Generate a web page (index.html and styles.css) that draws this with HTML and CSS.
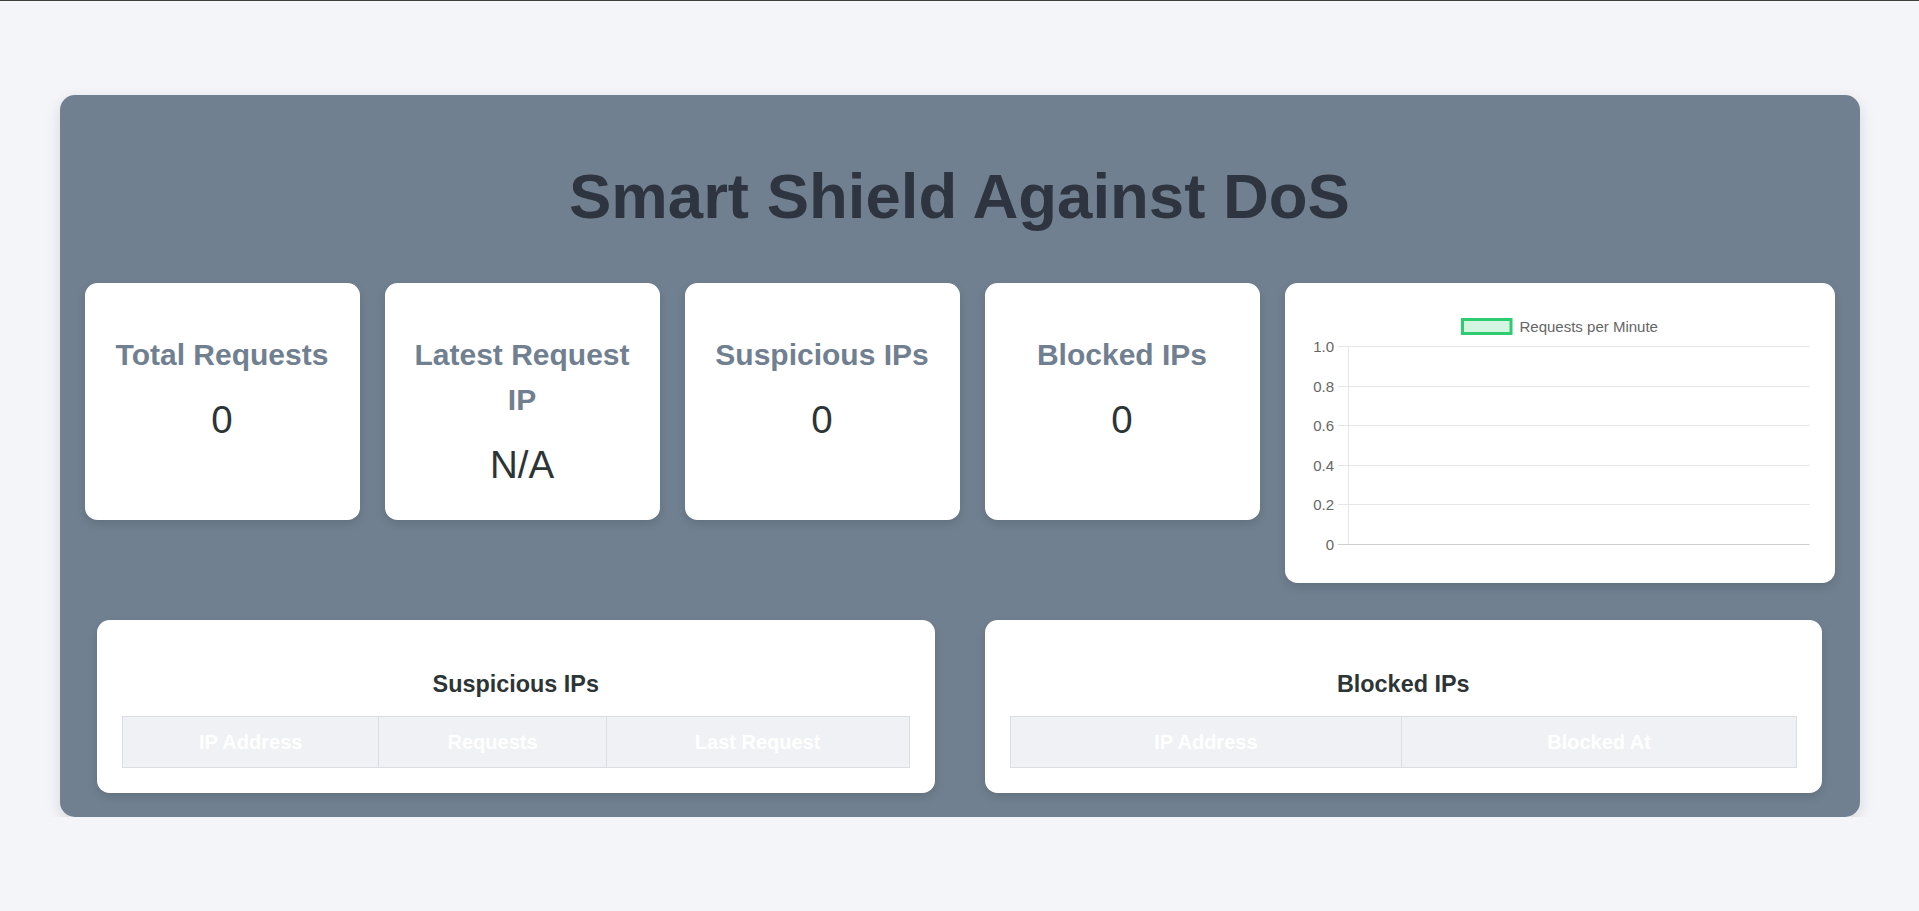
FILE: index.html
```html
<!DOCTYPE html>
<html lang="en">
<head>
<meta charset="utf-8">
<title>Smart Shield Against DoS</title>
<link rel="stylesheet" href="styles.css">
</head>
<body>
<div class="container">
  <h1 class="page-title">Smart Shield Against DoS</h1>

  <div class="top-row">
    <div class="stats">
      <div class="card stat-card">
        <h3 class="stat-title">Total Requests</h3>
        <p class="stat-value">0</p>
      </div>
      <div class="card stat-card">
        <h3 class="stat-title">Latest Request IP</h3>
        <p class="stat-value">N/A</p>
      </div>
      <div class="card stat-card">
        <h3 class="stat-title">Suspicious IPs</h3>
        <p class="stat-value">0</p>
      </div>
      <div class="card stat-card">
        <h3 class="stat-title">Blocked IPs</h3>
        <p class="stat-value">0</p>
      </div>
    </div>

    <div class="card chart-card">
      <svg class="chart" width="500" height="250" viewBox="0 0 500 250" xmlns="http://www.w3.org/2000/svg">
        <rect x="152.5" y="11.5" width="48.5" height="14" fill="rgba(46,204,113,0.2)" stroke="#2ecc71" stroke-width="3"/>
        <text x="209.5" y="23.5" class="chart-text">Requests per Minute</text>

        <g stroke="#e6e6e6" stroke-width="1">
          <line x1="28" y1="38.5" x2="499.5" y2="38.5"/>
          <line x1="28" y1="78.5" x2="499.5" y2="78.5"/>
          <line x1="28" y1="117.5" x2="499.5" y2="117.5"/>
          <line x1="28" y1="157.5" x2="499.5" y2="157.5"/>
          <line x1="28" y1="196.5" x2="499.5" y2="196.5"/>
          <line x1="38.5" y1="38" x2="38.5" y2="236"/>
        </g>
        <line x1="28" y1="236.5" x2="499.5" y2="236.5" stroke="#cfcfcf" stroke-width="1"/>

        <g class="chart-text" text-anchor="end">
          <text x="24" y="43.5">1.0</text>
          <text x="24" y="83.5">0.8</text>
          <text x="24" y="122.5">0.6</text>
          <text x="24" y="162.5">0.4</text>
          <text x="24" y="201.5">0.2</text>
          <text x="24" y="241.5">0</text>
        </g>
      </svg>
    </div>
  </div>

  <div class="bottom-row">
    <div class="card table-card">
      <h3 class="table-title">Suspicious IPs</h3>
      <table class="data-table suspicious">
        <thead>
          <tr><th>IP Address</th><th>Requests</th><th>Last Request</th></tr>
        </thead>
        <tbody></tbody>
      </table>
    </div>
    <div class="card table-card">
      <h3 class="table-title">Blocked IPs</h3>
      <table class="data-table blocked">
        <thead>
          <tr><th>IP Address</th><th>Blocked At</th></tr>
        </thead>
        <tbody></tbody>
      </table>
    </div>
  </div>
</div>
</body>
</html>
```

FILE: styles.css
```css
* {
  box-sizing: border-box;
}

html, body {
  margin: 0;
  padding: 0;
}

body {
  background: #f4f5f8;
  border-top: 1px solid #3c403c;
  font-family: "Liberation Sans", Arial, sans-serif;
  line-height: 1.5;
  color: #2d3436;
}

.container {
  width: 1800px;
  margin: 94px auto 0;
  padding: 25px 25px 24px;
  background: #708090;
  border-radius: 15px;
  box-shadow: 0 5px 15px rgba(0, 0, 0, 0.12);
}

.page-title {
  margin: 29px 0 39px;
  font-size: 63.5px;
  line-height: 1.5;
  font-weight: 700;
  text-align: center;
  color: #2f3540;
}

.top-row {
  display: grid;
  grid-template-columns: 47fr 22fr;
  gap: 25px;
  align-items: start;
}

.stats {
  display: grid;
  grid-template-columns: repeat(4, 1fr);
  gap: 25px;
}

.card {
  background: #ffffff;
  border-radius: 12.5px;
  box-shadow: 0 4px 10px rgba(0, 0, 0, 0.12);
}

.stat-card {
  padding: 25px;
  text-align: center;
}

.stat-title {
  margin: 24px 0 13px;
  font-size: 30px;
  line-height: 45px;
  font-weight: 700;
  color: #708090;
}

.stat-value {
  margin: 0;
  font-size: 38.5px;
  line-height: 60px;
  color: #2d3436;
}

.chart-card {
  padding: 25px;
}

.chart {
  display: block;
}

.chart-text {
  font-family: "Liberation Sans", Arial, sans-serif;
  font-size: 15px;
  fill: #666666;
}

.bottom-row {
  display: flex;
  gap: 50px;
  padding: 0 12.5px;
  margin-top: 36.5px;
}

.table-card {
  flex: 1 1 0;
  padding: 25px;
  text-align: center;
}

.table-title {
  margin: 22.5px 0 13.6px;
  font-size: 23.4px;
  line-height: 1.5;
  font-weight: 700;
  color: #2d3436;
}

.data-table {
  width: 100%;
  border-collapse: collapse;
}

.data-table th {
  padding: 10px;
  font-size: 20px;
  line-height: 30px;
  font-weight: 700;
  color: #ffffff;
  background: #f0f1f5;
  border: 1px solid #dcdde2;
}

.suspicious th:nth-child(1) { width: 32.6%; }
.suspicious th:nth-child(2) { width: 28.9%; }
.suspicious th:nth-child(3) { width: 38.5%; }

.blocked th:nth-child(1) { width: 49.8%; }
.blocked th:nth-child(2) { width: 50.2%; }
```
